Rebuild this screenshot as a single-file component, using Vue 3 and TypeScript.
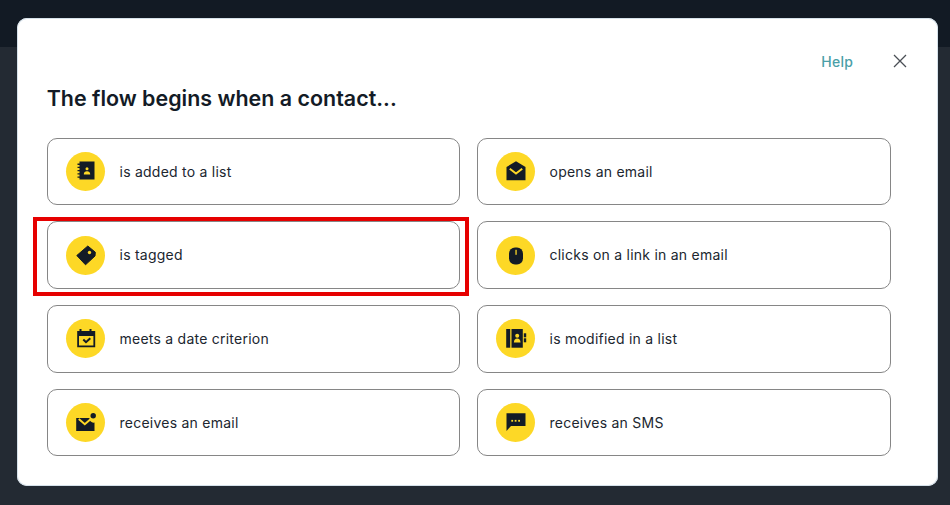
<script setup lang="ts">
interface Option { label: string; icon: string }
const options: Option[] = [
  { label: 'is added to a list', icon: 'book' },
  { label: 'opens an email', icon: 'open' },
  { label: 'is tagged', icon: 'tag' },
  { label: 'clicks on a link in an email', icon: 'mouse' },
  { label: 'meets a date criterion', icon: 'date' },
  { label: 'is modified in a list', icon: 'mod' },
  { label: 'receives an email', icon: 'mail' },
  { label: 'receives an SMS', icon: 'sms' },
]
</script>

<template>
  <div class="page">
    <div class="topbar"></div>
    <div class="modal">
      <div class="head">
        <a class="help">Help</a>
        <svg class="close" width="14" height="14" viewBox="0 0 14 14">
          <path d="M1 1l12 12M13 1L1 13" stroke="#4a4f55" stroke-width="1.3" fill="none" />
        </svg>
      </div>
      <h1 class="title">The flow begins when a contact...</h1>
      <div class="grid">
        <div v-for="o in options" :key="o.label" class="option">
          <span class="badge">
            <svg width="24" height="24" viewBox="0 0 24 24" fill="#131b26">
              <template v-if="o.icon === 'book'">
                <path d="M5.500 2.500h15v18h-15v-1.800H3.500v-1.300h2v-1.900H3.500v-1.300h2v-1.900H3.500V11h2V9.100H3.500V7.800h2V5.900H3.500V4.600h2z" />
                <circle cx="13" cy="9.800" r="1.500" fill="#fdd826" />
                <path d="M9.800 15.500c0-2 1.300-3.200 3.200-3.200s3.200 1.200 3.200 3.200z" fill="#fdd826" />
              </template>
              <template v-else-if="o.icon === 'open'">
                <path d="M12 2.300l9.500 5.700V21.200H2.500V8z" />
                <path d="M5.800 9.800l6.200 4.800 6.200-4.800" fill="none" stroke="#fdd826" stroke-width="2" />
              </template>
              <template v-else-if="o.icon === 'tag'">
                <path d="M2.800 12.500L13.800 3 21.300 9.200l-.3 3.800L11.500 21.800z" stroke="#131b26" stroke-width="1" stroke-linejoin="round" />
                <circle cx="15.500" cy="9.500" r="1.700" fill="#fdd826" />
              </template>
              <template v-else-if="o.icon === 'mouse'">
                <rect x="5" y="4.500" width="14" height="17" rx="6" />
                <rect x="11.400" y="6.800" width="1.300" height="5" fill="#fdd826" />
              </template>
              <template v-else-if="o.icon === 'date'">
                <path fill-rule="evenodd" d="M5.500 2h2v2h8V2h2v2h3.700v16.300H3.200V4h2.300zM5 9v9.500h14.400V9z" />
                <path d="M9.300 12.500l2.700 2.700 4.300-4" fill="none" stroke="#131b26" stroke-width="2" />
              </template>
              <template v-else-if="o.icon === 'mod'">
                <rect x="2.200" y="2" width="4" height="18.700" />
                <rect x="7.500" y="2" width="11.300" height="18.700" />
                <circle cx="13.200" cy="8.700" r="2" fill="#fdd826" />
                <path d="M9.900 15.500c0-2.500 1.400-3.900 3.300-3.900s3.300 1.400 3.300 3.900z" fill="#fdd826" />
                <rect x="19.800" y="6.300" width="2.400" height="4" />
                <rect x="19.800" y="11.300" width="2.400" height="4" />
              </template>
              <template v-else-if="o.icon === 'mail'">
                <path d="M2.200 7h13.300a4 4 0 0 0 5 4.500V20H2.200z" />
                <path d="M4.800 8l6 5.200 5.700-5" fill="none" stroke="#fdd826" stroke-width="2" />
                <circle cx="19.200" cy="4.700" r="2.700" />
              </template>
              <template v-else>
                <path d="M2.500 2.300h19V15H7l-4.500 5z" />
                <rect x="7.300" y="8.900" width="1.800" height="1.800" fill="#fdd826" />
                <rect x="10.700" y="8.900" width="1.800" height="1.800" fill="#fdd826" />
                <rect x="14.200" y="8.900" width="1.800" height="1.800" fill="#fdd826" />
              </template>
            </svg>
          </span>
          <span class="label">{{ o.label }}</span>
        </div>
      </div>
    </div>
    <div class="highlight"></div>
  </div>
</template>

<style>
html, body { margin: 0; padding: 0; }
</style>

<style scoped>
.page {
  position: relative;
  width: 950px;
  height: 505px;
  overflow: hidden;
  background: #232a33;
  font-family: Inter, "Liberation Sans", sans-serif;
  box-sizing: border-box;
  padding: 18px 12px 0 17px;
}
.topbar {
  position: absolute;
  top: 0;
  left: 0;
  right: 0;
  height: 47px;
  background: #121a24;
}
.modal {
  position: relative;
  box-sizing: border-box;
  width: 921px;
  height: 468px;
  background: #fff;
  border-radius: 10px;
  box-shadow: 0 0 0 1px #d5e1ea inset;
  padding: 0 47px 0 30px;
}
.head {
  display: flex;
  justify-content: flex-end;
  align-items: center;
  gap: 40px;
  height: 85px;
  margin-right: -16px;
}
.help {
  color: #4a9fa8;
  font-size: 14px;
  font-weight: 500;
  letter-spacing: 0.2px;
  padding-top: 1px;
}
.close { display: block; }
.title {
  margin: -20px 0 0 -0.300px;
  height: 54.700px;
  font-size: 21.450px;
  line-height: 30px;
  font-weight: 600;
  color: #131b26;
}
.grid {
  display: grid;
  grid-template-columns: 413px 414px;
  grid-auto-rows: 67.500px;
  column-gap: 17px;
  row-gap: 16.200px;
}
.option {
  box-sizing: border-box;
  display: flex;
  align-items: center;
  gap: 14.500px;
  padding: 0 18px;
  border: 1px solid #868686;
  border-radius: 10px;
  background: #fff;
}
.badge {
  flex: none;
  width: 39px;
  height: 39px;
  border-radius: 50%;
  background: #fdd826;
  display: flex;
  align-items: center;
  justify-content: center;
}
.label {
  font-size: 14px;
  font-weight: 400;
  color: #20262f;
  letter-spacing: 0.24px;
  padding-bottom: 0.400px;
}
.highlight {
  position: absolute;
  left: 33px;
  top: 217px;
  width: 436px;
  height: 79px;
  box-sizing: border-box;
  border: 4px solid #e60000;
  pointer-events: none;
}
</style>
